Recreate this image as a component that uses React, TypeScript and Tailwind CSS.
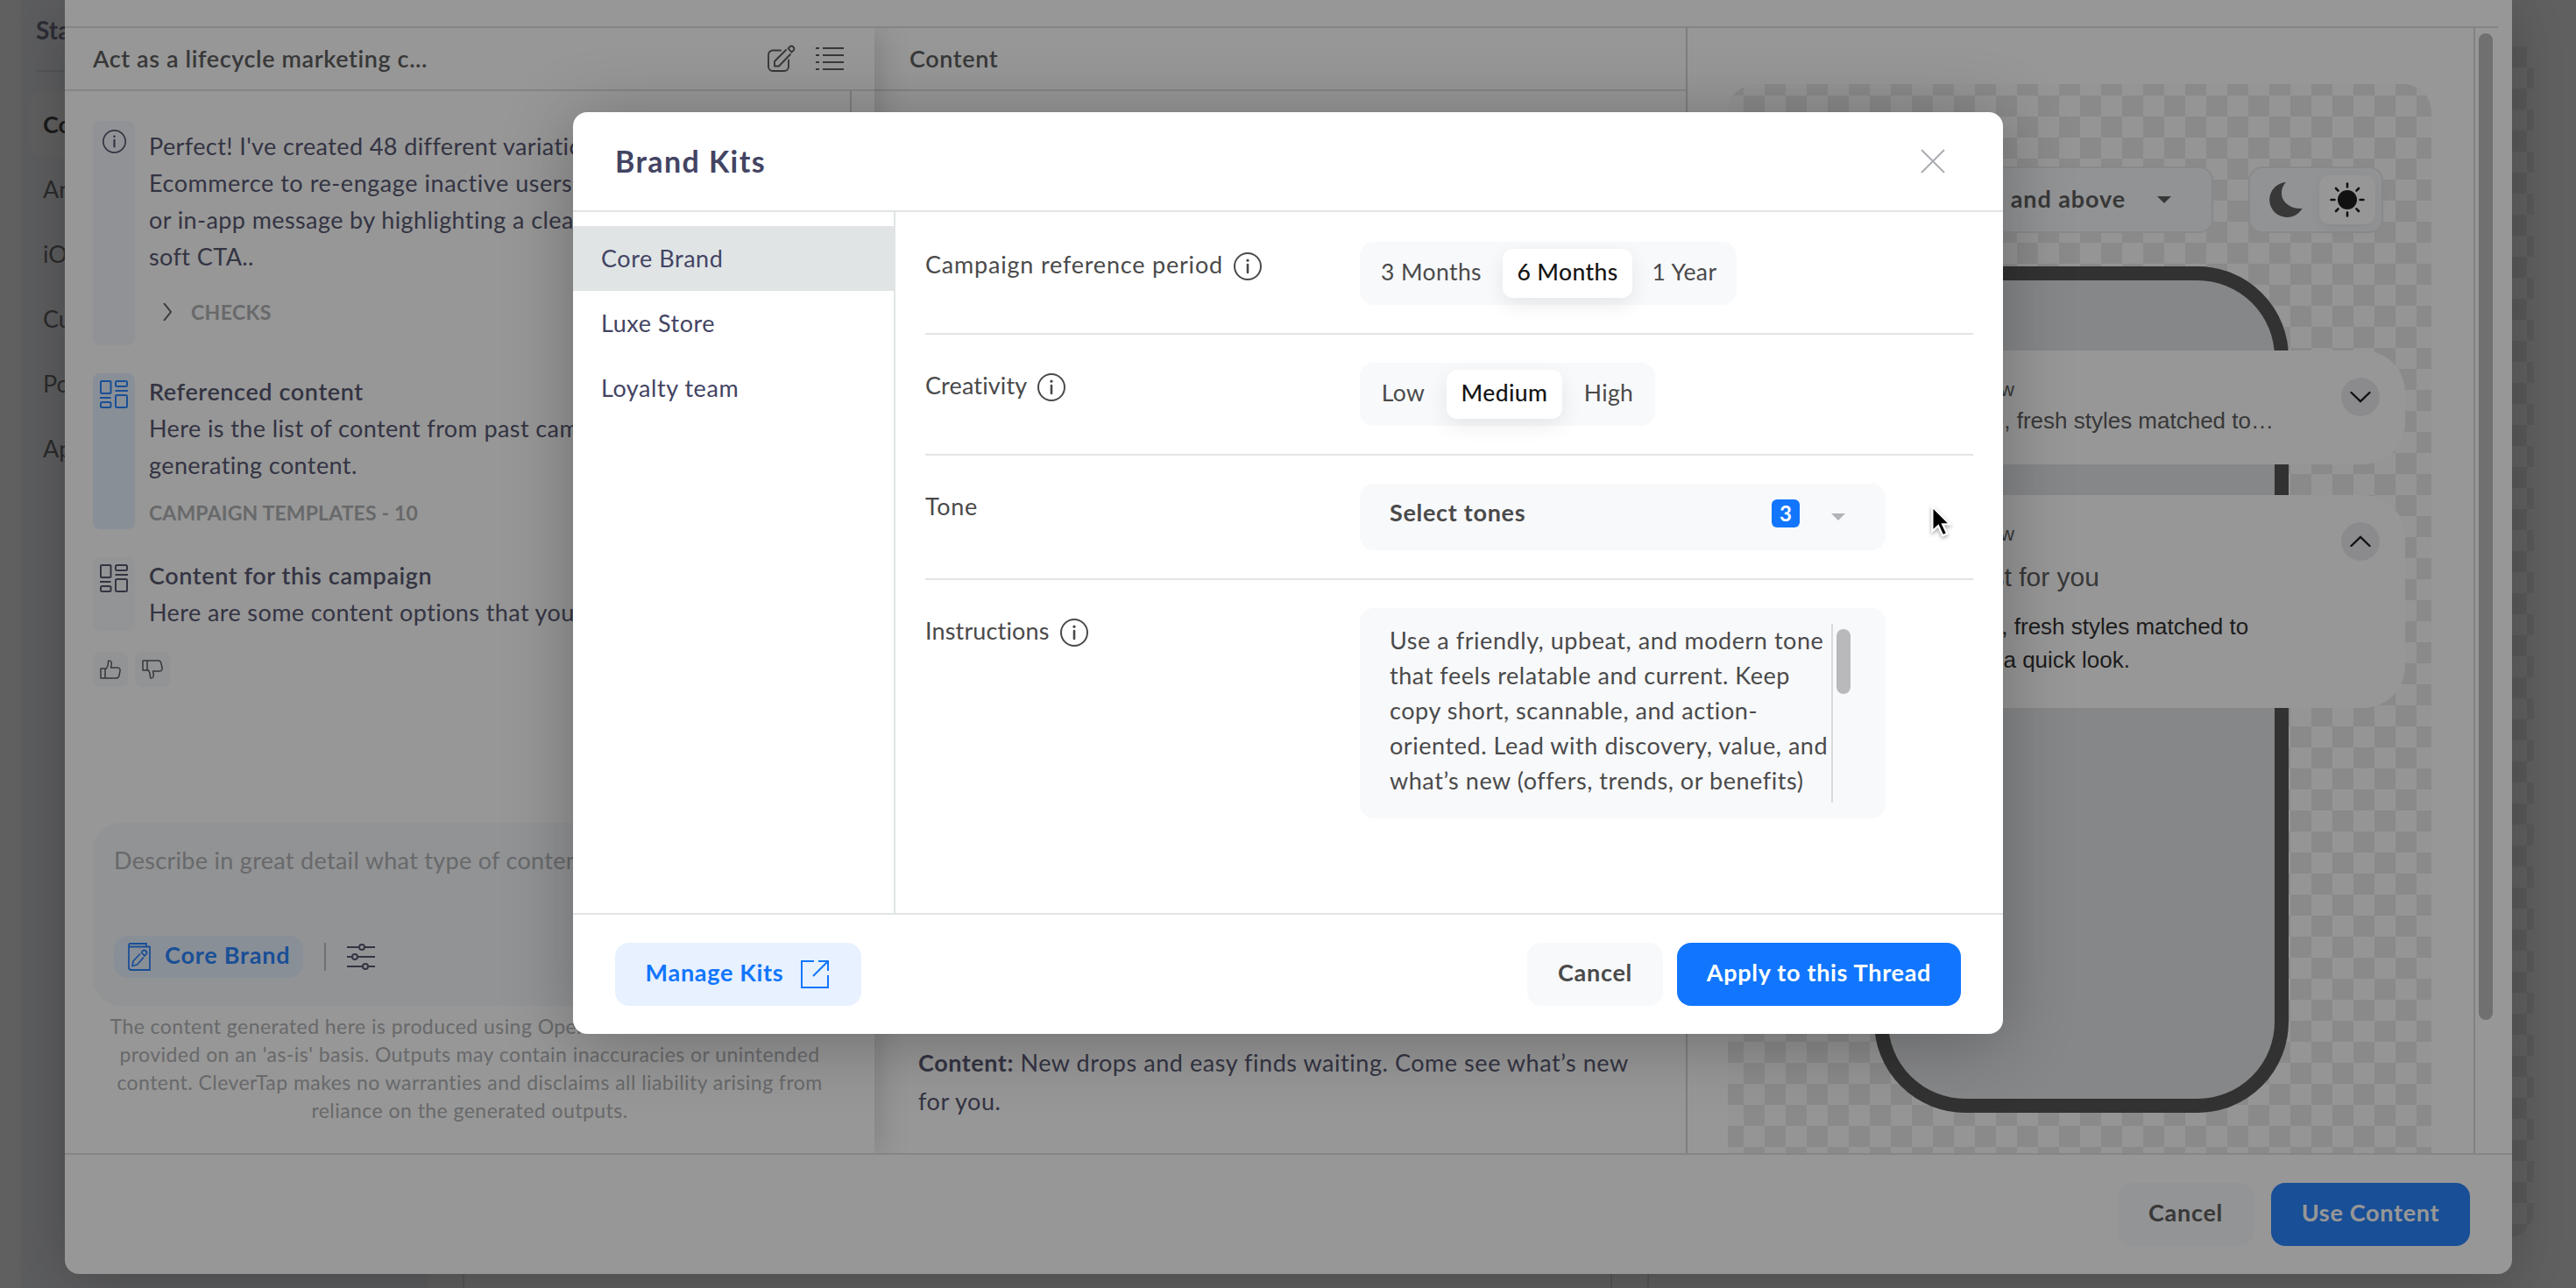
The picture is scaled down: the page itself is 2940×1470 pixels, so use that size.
import { useState } from "react"
import type { ReactNode } from "react"
import clsx from "clsx"

const navItems = ["Content", "Android", "iOS", "Custom", "Position", "Appearance"]
const kits = ["Core Brand", "Luxe Store", "Loyalty team"]

const periods = [
  { label: "3 Months", width: "w-[147px]" },
  { label: "6 Months", width: "w-[148px]" },
  { label: "1 Year", width: "w-[103px]" },
]

const creativityLevels = [
  { label: "Low", width: "w-[83px]" },
  { label: "Medium", width: "w-[132px]" },
  { label: "High", width: "w-[90px]" },
]

const instructionLines = [
  "Use a friendly, upbeat, and modern tone",
  "that feels relatable and current. Keep",
  "copy short, scannable, and action-",
  "oriented. Lead with discovery, value, and",
  "what’s new (offers, trends, or benefits)",
]

function InfoIcon({ className }: { className?: string }) {
  return (
    <svg viewBox="0 0 32 32" fill="none" stroke="currentColor" strokeWidth="2" className={className}>
      <circle cx="16" cy="16" r="15" />
      <path d="M16 14v9" strokeWidth="2.6" strokeLinecap="round" />
      <circle cx="16" cy="9.2" r="1.6" fill="currentColor" stroke="none" />
    </svg>
  )
}

function BlocksIcon() {
  return (
    <svg viewBox="0 0 32 32" fill="none" stroke="currentColor" strokeWidth="2" className="size-8">
      <rect x="1" y="1" width="11.5" height="14" rx="1" />
      <rect x="18" y="1" width="13" height="6" rx="1.5" />
      <path d="M17.500 12H32M0 20H12.500" />
      <rect x="18" y="17" width="13" height="14" rx="1.500" />
      <rect x="1" y="25" width="11.500" height="6" rx="1.500" />
    </svg>
  )
}

function EditIcon() {
  return (
    <svg viewBox="0 0 32 32" fill="none" stroke="currentColor" strokeWidth="1.900" className="size-8">
      <path d="M15 6.500H6a5 5 0 0 0-5 5V25a5 5 0 0 0 5 5h13a5 5 0 0 0 5-5v-7.500" strokeLinecap="round" />
      <path d="M21 6L8 19v5.500h5L26 11" strokeLinejoin="round" strokeLinecap="round" />
      <path d="M23.600 4.400l1.700-2a3 3 0 0 1 4.400 4l-2.300 2.300z" strokeLinejoin="round" />
    </svg>
  )
}

function ListIcon() {
  return (
    <svg viewBox="0 0 32 28" fill="none" stroke="currentColor" strokeWidth="2" className="h-7 w-8">
      <path d="M0 2h4M8 2h24M0 10h4M8 10h24M0 18h4M8 18h24M0 26h4M8 26h24" />
    </svg>
  )
}

function ThumbIcon({ down }: { down?: boolean }) {
  return (
    <svg
      viewBox="0 0 24 22"
      fill="none"
      stroke="currentColor"
      strokeWidth="1.500"
      strokeLinejoin="round"
      className={clsx("h-[22px] w-6", down && "-scale-y-100")}
    >
      <path d="M1 10h5v11H1zM6 11c2.500-1.500 3.500-4 3.500-9 0-1.400 3.800-1.600 3.800 2 0 2-.5 3.500-.8 5H20c3 0 3.400 2.500 2.800 5l-1 4.500c-.5 1.700-1.300 2.500-3 2.500H6" />
    </svg>
  )
}

function KitIcon() {
  return (
    <svg viewBox="0 0 26 32" fill="none" stroke="currentColor" strokeWidth="1.800" className="h-8 w-[26px]">
      <path d="M1 3.500V28a3 3 0 0 0 3 3h21V4.500H2.500C.5 4.500.5 1 2.500 1H21v3.500" />
      <path d="M14 12.500L6 21l-1 5.500 5.500-1.500 7.500-8.500" strokeLinejoin="round" />
      <path d="M15.500 11l1.200-1.500a2.600 2.600 0 0 1 4 3.500L19 15z" strokeLinejoin="round" />
    </svg>
  )
}

function SlidersIcon() {
  return (
    <svg viewBox="0 0 32 30" fill="none" stroke="currentColor" strokeWidth="2" className="h-[30px] w-8">
      <path d="M0 4h14M20 4h12M0 15h6M12 15h20M0 26h18M24 26h8" />
      <circle cx="17" cy="4" r="3" />
      <circle cx="9" cy="15" r="3" />
      <circle cx="21" cy="26" r="3" />
    </svg>
  )
}

function Caret({ className }: { className?: string }) {
  return (
    <svg viewBox="0 0 16 8" fill="currentColor" className={clsx("h-2 w-4", className)}>
      <path d="M0 0h16L8 8z" />
    </svg>
  )
}

function ChevronBadge({ up }: { up?: boolean }) {
  return (
    <div className="flex size-11 shrink-0 items-center justify-center rounded-full bg-[#e9e9ee]">
      <svg
        viewBox="0 0 24 14"
        fill="none"
        stroke="black"
        strokeWidth="2.400"
        strokeLinecap="round"
        className={clsx("h-3.5 w-6", up && "rotate-180")}
      >
        <path d="M1.500 2L12 12 22.500 2" />
      </svg>
    </div>
  )
}

// Page that sits under both dialogs
function EditorPage() {
  return (
    <div className="flex h-full gap-[39px] bg-white pl-6">
      <aside className="w-[465px] bg-[#f1f4fa] pl-[17px] pt-[14px]">
        <h2 className="text-[28px] font-bold leading-10 text-[#434460]">Starting</h2>
        <div className="mt-[26px] h-0.5 bg-[#d5d8db]" />
        <nav className="-ml-2 mt-[23px] flex flex-col">
          {navItems.map((item, i) => (
            <span
              key={item}
              className={clsx(
                "rounded-2xl pl-4 text-[27px] leading-[74px]",
                i === 0 ? "bg-[#fbfcfd] font-bold text-black" : "text-[#3c3c3c]",
              )}
            >
              {item}
            </span>
          ))}
        </nav>
      </aside>
      <main className="flex-1 border-l-2 border-[#d5d8db] pr-12">
        <div className="ml-auto flex h-full w-[1054px] border-l-2 border-[#d5d8db]">
          <div className="ml-10 flex-1 border-l-2 border-[#d5d8db] pt-10">
            <div className="h-[1373px] rounded-[32px] bg-[conic-gradient(#e6e6e6_25%,#fff_0_50%,#e6e6e6_0_75%,#fff_0)] bg-[length:48px_48px] bg-[position:18px_-11px]" />
          </div>
        </div>
      </main>
    </div>
  )
}

function Message({
  icon,
  tone,
  className,
  children,
}: {
  icon: ReactNode
  tone: string
  className?: string
  children: ReactNode
}) {
  return (
    <div className={clsx("flex gap-4", className)}>
      <div className={clsx("flex w-12 shrink-0 justify-center rounded-lg pt-2", tone)}>{icon}</div>
      <div className="whitespace-nowrap text-[27px] leading-[42px] tracking-[0.4px] text-[#434460]">{children}</div>
    </div>
  )
}

function ChatPanel() {
  return (
    <section className="relative z-10 flex w-[924px] shrink-0 flex-col bg-white shadow-[8px_0_32px_rgba(0,0,0,0.16)]">
      <header className="flex h-[72px] items-center border-b-2 border-[#d9dcde] pl-8 pr-[35px] text-[#4a4a4a]">
        <h3 className="flex-1 text-[27px] font-semibold tracking-[0.6px]">Act as a lifecycle marketing c...</h3>
        <EditIcon />
        <div className="w-[23px]" />
        <ListIcon />
      </header>

      <div className="flex flex-1 flex-col">
        <div className="mr-[26px] h-[811px] border-r-2 border-[#d0d0d0] pl-8 pt-[34px]">
          <Message
            icon={<InfoIcon className="mt-[2px] size-[27px]" />}
            tone="bg-[#f3f6fb] text-[#434460]"
            className="h-[256px]"
          >
            <div className="pt-2">
              <p>Perfect! I've created 48 different variations for</p>
              <p className="tracking-[0.55px]">Ecommerce to re-engage inactive users through</p>
              <p>or in-app message by highlighting a clear value and</p>
              <p>soft CTA..</p>
            </div>
            <div className="mt-[14px] flex items-center gap-[22px] pl-4">
              <svg viewBox="0 0 10 20" fill="none" stroke="#4a4a4a" strokeWidth="2" className="h-5 w-2.5">
                <path d="M1 0l8 10-8 10" />
              </svg>
              <span className="text-[23px] font-bold leading-[56px] text-[#a5a7aa]">CHECKS</span>
            </div>
          </Message>

          <Message icon={<BlocksIcon />} tone="bg-[#e5f0ff] text-[#1176fd]" className="mt-8 h-[178px]">
            <p className="font-semibold tracking-[0.6px]">Referenced content</p>
            <p>Here is the list of content from past campaigns for</p>
            <p>generating content.</p>
            <p className="mt-[14px] text-[23px] font-bold leading-[38px] tracking-[0.15px] text-[#a5a7aa]">
              CAMPAIGN TEMPLATES - 10
            </p>
          </Message>

          <Message icon={<BlocksIcon />} tone="bg-[#f8f9fc] text-[#434460]" className="mt-8 h-[84px]">
            <p className="font-semibold tracking-[0.6px]">Content for this campaign</p>
            <p>Here are some content options that you can use</p>
          </Message>

          <div className="mt-6 flex gap-2 text-[#4a4a4a]">
            <span className="flex size-10 items-center justify-center rounded-lg bg-[#f5f7fb]">
              <ThumbIcon />
            </span>
            <span className="flex size-10 items-center justify-center rounded-lg bg-[#f5f7fb]">
              <ThumbIcon down />
            </span>
          </div>
        </div>

        <div className="mx-8 mt-6 h-[209px] rounded-[32px] bg-[#f5f7fb] px-6 pt-[22px]">
          <p className="whitespace-nowrap text-[27px] leading-[42px] tracking-[0.3px] text-[#a5a7aa]">
            Describe in great detail what type of content you want
          </p>
          <div className="mt-[65px] flex items-center">
            <div className="flex h-12 items-center gap-4 rounded-2xl bg-[#e5f0ff] pl-4 pr-[15px] text-[#1176fd]">
              <KitIcon />
              <span className="-mt-1 text-[27px] font-bold tracking-[0.8px]">Core Brand</span>
            </div>
            <div className="ml-6 h-8 w-0.5 bg-[#b5b7ba]" />
            <span className="ml-6 text-[#434460]">
              <SlidersIcon />
            </span>
          </div>
        </div>

        <div className="mt-[7px] whitespace-nowrap text-center text-[23px] leading-8 tracking-[0.45px] text-[#a5a7aa]">
          <p>The content generated here is produced using OpenAI tools and models and is</p>
          <p>provided on an 'as-is' basis. Outputs may contain inaccuracies or unintended</p>
          <p>content. CleverTap makes no warranties and disclaims all liability arising from</p>
          <p>reliance on the generated outputs.</p>
        </div>
      </div>
    </section>
  )
}

function PhonePreview() {
  return (
    <section className="flex flex-1 border-l-2 border-[#d0d0d0] pl-[46px] pt-16">
      <div className="relative w-[803px] rounded-t-[32px] bg-[conic-gradient(#e6e6e6_25%,#fbfbfb_0_50%,#e6e6e6_0_75%,#fbfbfb_0)] bg-[length:48px_48px] bg-[position:18px_-11px] pt-[94px]">
        <div className="flex justify-end gap-10 pr-[55px] text-[#4a4a4a]">
          <div className="flex h-[76px] w-[420px] items-center justify-end gap-[36px] rounded-2xl border-2 border-[#e3e5e9] bg-[#f6f8fb] pr-[46px] text-[27px] font-bold tracking-[0.9px]">
            <span className="-mt-0.5">Android 12 and above</span>
            <Caret />
          </div>
          <div className="flex h-[76px] w-[154px] items-center justify-between rounded-2xl border-2 border-[#e3e5e9] bg-[#f6f8fb] pl-5 pr-[7px]">
            <svg viewBox="0 0 40 40" fill="currentColor" className="size-10">
              <path d="M21 0A20 20 0 1 0 39.500 30C28 31 17 24 16 14 15.700 8 17.500 3.500 21 0z" />
            </svg>
            <div className="flex h-14 w-16 items-center justify-center rounded-xl bg-white text-black shadow-[0_4px_16px_rgba(0,0,0,0.08)]">
              <svg viewBox="0 0 40 40" stroke="currentColor" strokeWidth="2.600" strokeLinecap="round" className="size-10">
                <circle cx="20" cy="20" r="11" stroke="none" fill="currentColor" />
                <path d="M20 1.500v4M20 34.500v4M1.500 20h4M34.500 20h4M7 7l2.600 2.600M30.400 30.400L33 33M33 7l-2.600 2.600M9.600 30.400L7 33" />
              </svg>
            </div>
          </div>
        </div>

        <div className="ml-[167px] mt-[38px] h-[966px] w-[473px] rounded-[104px] border-[16px] border-[#404040] bg-[#dfe1e4]" />

        {/* notification cards overlap the phone frame */}
        <div className="absolute inset-x-[30px] top-[304px] flex flex-col gap-[35px] font-['Liberation_Sans',sans-serif] text-[#4a4a4a]">
          <div className="flex h-[130px] justify-end gap-[77px] rounded-[48px] bg-white pr-[29px] pt-[31px]">
            <div className="w-[500px] whitespace-nowrap">
              <p className="mr-[296px] text-right text-[22px] leading-7">App name • now</p>
              <p className="mt-[3px] text-right text-[26px] leading-9">New for fall here, fresh styles matched to…</p>
            </div>
            <ChevronBadge />
          </div>
          <div className="flex h-[243px] justify-end gap-[77px] rounded-[48px] bg-white pr-[29px] pt-[31px]">
            <div className="w-[500px] whitespace-nowrap">
              <p className="mr-[296px] text-right text-[22px] leading-7">App name • now</p>
              <p className="mr-[199px] mt-[15px] text-right text-[30px] leading-10">Picked just for you</p>
              <p className="mr-[30px] mt-[17px] text-right text-[26px] leading-[38px] text-[#151515]">
                New for fall here, fresh styles matched to
              </p>
              <p className="mr-[164px] text-right text-[26px] leading-[38px] text-[#151515]">you. Take a quick look.</p>
            </div>
            <ChevronBadge up />
          </div>
        </div>
      </div>
      <div className="-mt-16 ml-[48px] border-l-2 border-[#d5d5d5] pl-1 pt-1.5">
        <div className="h-[1126px] w-4 rounded-full bg-[#b5b5b5]" />
      </div>
    </section>
  )
}

function ContentDialog() {
  return (
    <div className="isolate ml-[74px] flex h-[1454px] w-[2793px] flex-col overflow-hidden rounded-b-2xl bg-white shadow-[0_8px_64px_rgba(0,0,0,0.28)]">
      <div className="mr-4 h-8 shrink-0 border-b-2 border-[#d9dcde]" />
      <div className="flex h-[1284px] shrink-0 overflow-hidden">
        <ChatPanel />
        <section className="flex w-[926px] shrink-0 flex-col justify-between">
          <header className="flex h-[72px] items-center border-b-2 border-[#d9dcde] pl-10 text-[27px] font-semibold tracking-[0.6px] text-[#4a4a4a]">
            Content
          </header>
          <p className="whitespace-nowrap pb-[37px] pl-[50px] text-[27px] leading-[44px] tracking-[0.55px] text-[#434460]">
            <b>Content:</b> New drops and easy finds waiting. Come see what’s new
            <br />
            for you.
          </p>
        </section>
        <PhonePreview />
      </div>
      <footer className="flex flex-1 items-start justify-end gap-5 border-t-2 border-[#d9dcde] pr-12 pt-8 text-[27px] font-bold tracking-[0.7px]">
        <button className="h-[72px] w-[155px] rounded-2xl bg-[#f8f9fb] pb-1 text-[#4a4a4a]">Cancel</button>
        <button className="h-[72px] w-[227px] rounded-2xl bg-[#1176fd] pb-1 text-white">Use Content</button>
      </footer>
    </div>
  )
}

function Segmented({ options, initial }: { options: { label: string; width: string }[]; initial: string }) {
  const [value, setValue] = useState(initial)
  return (
    <div className="flex h-[72px] items-center gap-2 rounded-2xl bg-[#f8f9fb] px-2">
      {options.map(({ label, width }) => (
        <button
          key={label}
          onClick={() => setValue(label)}
          className={clsx(
            "h-14 rounded-xl pb-0.5 text-[26.5px] tracking-[0.4px]",
            width,
            label === value ? "bg-white font-medium text-[#151515] shadow-[0_8px_24px_rgba(0,0,0,0.08)]" : "text-[#4a4a4a]",
          )}
        >
          {label}
        </button>
      ))}
    </div>
  )
}

function SettingRow({
  label,
  labelClass = "tracking-[0.15px]",
  info,
  className,
  children,
}: {
  label: string
  labelClass?: string
  info?: boolean
  className?: string
  children: ReactNode
}) {
  return (
    <div className={clsx("flex items-start border-[#e0e4e3]", className)}>
      <div className="mt-2 flex h-10 w-[496px] items-center gap-3 text-[27px] text-[#4a4a4a]">
        <span className={clsx("-mt-1", labelClass)}>{label}</span>
        {info && <InfoIcon className="size-8" />}
      </div>
      {children}
    </div>
  )
}

function BrandKitsDialog() {
  const [kit, setKit] = useState(kits[0])

  return (
    <div className="mx-auto mt-32 flex h-[1052px] w-[1632px] flex-col rounded-2xl bg-white shadow-[0_8px_80px_rgba(0,0,0,0.28)]">
      <header className="flex h-[114px] shrink-0 items-center justify-between border-b-2 border-[#e0e4e5] pl-12 pr-[66px]">
        <h1 className="-mt-0.5 text-[34px] font-bold tracking-[1.4px] text-[#434463]">Brand Kits</h1>
        <svg viewBox="0 0 28 28" fill="none" stroke="#a9adb2" strokeWidth="2" className="size-7">
          <path d="M1 1l26 26M27 1L1 27" />
        </svg>
      </header>

      <div className="flex h-[800px]">
        <nav className="flex w-[368px] flex-col border-r-2 border-[#e0e4e5] pt-4">
          {kits.map((name) => (
            <button
              key={name}
              onClick={() => setKit(name)}
              className={clsx(
                "h-[74px] pl-8 text-left text-[27px] tracking-[0.55px] text-[#434463]",
                name === kit && "bg-[#e0e4e5]",
              )}
            >
              {name}
            </button>
          ))}
        </nav>

        <div className="flex-1 px-[34px] pt-[34px]">
          <SettingRow
            label="Campaign reference period"
            labelClass="tracking-[0.8px]"
            info
            className="h-[106px] border-b-2"
          >
            <Segmented options={periods} initial="6 Months" />
          </SettingRow>
          <SettingRow label="Creativity" info className="mt-8 h-[106px] border-b-2">
            <Segmented options={creativityLevels} initial="Medium" />
          </SettingRow>
          <SettingRow label="Tone" labelClass="tracking-[0.7px]" className="mt-8 h-[110px] border-b-2">
            <div className="flex h-[76px] w-[600px] items-center rounded-2xl bg-[#f8f9fb] pl-[34px] pr-[46px]">
              <span className="-mt-2.5 flex-1 text-[27px] font-bold tracking-[0.7px] text-[#4a4a4a]">Select tones</span>
              <span className="-mt-2 flex size-8 items-center justify-center rounded-md bg-[#1176fd] text-[24px] font-bold text-white">
                3
              </span>
              <Caret className="ml-9 text-[#b0b3b8]" />
            </div>
          </SettingRow>
          <SettingRow label="Instructions" info className="mt-8">
            <div className="flex h-60 w-[600px] rounded-2xl bg-[#f8f9fb] pl-[34px] pt-4">
              <div className="w-[504px] whitespace-nowrap pt-px text-[27px] leading-10 tracking-[0.55px] text-[#4a4a4a]">
                {instructionLines.map((line) => (
                  <p key={line}>{line}</p>
                ))}
              </div>
              <div className="mt-0.5 h-[204px] border-l-2 border-[#d9dadc] pl-1 pt-1.5">
                <div className="h-[74px] w-4 rounded-full bg-[#b9b9bb]" />
              </div>
            </div>
          </SettingRow>
        </div>
      </div>

      <footer className="flex flex-1 items-start border-t-2 border-[#e0e4e5] px-12 pt-8 text-[27px] font-bold tracking-[0.7px]">
        <button className="flex h-[72px] w-[281px] items-center justify-center gap-[20px] rounded-2xl bg-[#e7f1ff] pr-0.5 text-[#1176fd]">
          <span className="-mt-1">Manage Kits</span>
          <svg viewBox="0 0 32 32" fill="none" stroke="currentColor" strokeWidth="2" className="size-8">
            <path d="M15 1H1v30h30V17M14 18L31 1M20 1h11v11" />
          </svg>
        </button>
        <button className="ml-auto h-[72px] w-[155px] rounded-2xl bg-[#f8f9fb] pb-1 text-[#4a4a4a]">Cancel</button>
        <button className="ml-4 h-[72px] w-[324px] rounded-2xl bg-[#1176fd] pb-1 text-white">Apply to this Thread</button>
      </footer>
    </div>
  )
}

export default function App() {
  return (
    <div className="relative h-[1470px] w-full overflow-hidden font-['Lato',sans-serif]">
      <EditorPage />
      <div className="absolute inset-0 bg-[rgba(36,36,36,0.475)]">
        <ContentDialog />
      </div>
      <div className="absolute inset-0 overflow-hidden bg-[rgba(36,36,36,0.475)]">
        <BrandKitsDialog />
      </div>
      <svg
        viewBox="0 0 20 32"
        className="absolute left-[2204px] top-[577px] h-9 w-[23px] drop-shadow-[0_2px_2px_rgba(0,0,0,0.35)]"
      >
        <path d="M1 1v25l6-5.500 4.500 10 4.500-2-4.500-9.500H19z" fill="black" stroke="white" strokeWidth="2" />
      </svg>
    </div>
  )
}
